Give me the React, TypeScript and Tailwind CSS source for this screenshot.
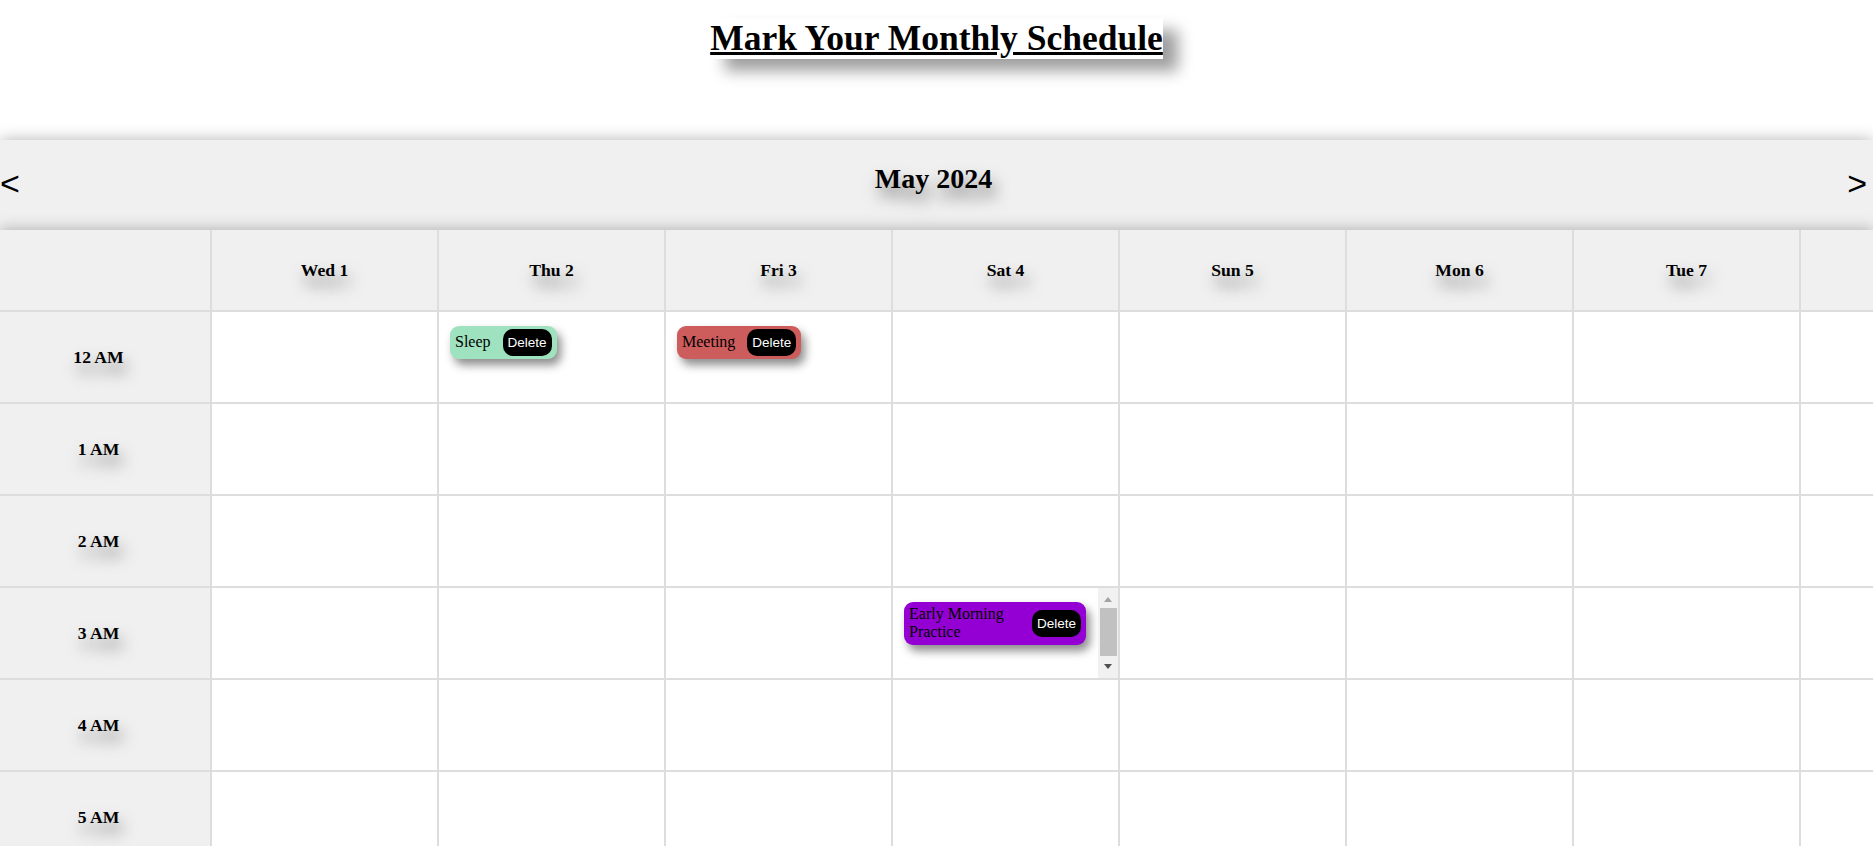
import React from "react";

type CalEvent = {
    day: number;
    hour: number;
    title: string;
    color: string;
};

const events: CalEvent[] = [
    { day: 2, hour: 0, title: "Sleep", color: "bg-[#9fe2bf]" },
    { day: 3, hour: 0, title: "Meeting", color: "bg-[#cd5c5c]" },
    { day: 4, hour: 3, title: "Early Morning Practice", color: "bg-[#9400d3]" },
];

const DAY_NAMES = ["Sun", "Mon", "Tue", "Wed", "Thu", "Fri", "Sat"];
const YEAR = 2024;
const MONTH = 4; // May

const hourLabel = (h: number): string => {
    const hh = h % 12 === 0 ? 12 : h % 12;
    return `${hh} ${h < 12 ? "AM" : "PM"}`;
};

function EventChip({ ev, fill }: { ev: CalEvent; fill?: boolean }) {
    return (
        <div
            className={`${fill ? "flex" : "inline-flex"} items-center gap-[12px] rounded-[9px] px-[5px] py-[3px] shadow-[4px_6px_10px_rgba(0,0,0,0.45)] ${ev.color}`}
        >
            <span className={`${fill ? "min-w-0 flex-1" : ""} text-[16px] leading-[18.4px] text-black`}>
                {ev.title}
            </span>
            <button className="shrink-0 rounded-[10px] bg-black px-[5px] py-[6px] font-['Liberation_Sans',Arial,sans-serif] text-[13.5px] leading-[15px] text-white">
                Delete
            </button>
        </div>
    );
}

// cell scrollbar drawn over the cell's right edge
function CellScrollbar() {
    return (
        <div className="absolute top-0 right-0 bottom-0 w-[20px] bg-[#f1f1f1]">
            <div className="absolute top-[9px] left-[6px] h-0 w-0 border-x-[4px] border-b-[5px] border-x-transparent border-b-[#a3a3a3]" />
            <div className="absolute top-[20px] left-[2px] h-[48px] w-[17px] bg-[#c1c1c1]" />
            <div className="absolute bottom-[9px] left-[6px] h-0 w-0 border-x-[4px] border-t-[5px] border-x-transparent border-t-[#505050]" />
        </div>
    );
}

const labelShadow = "[text-shadow:3px_10px_15px_rgba(0,0,0,0.5)]";

export default function App() {
    const daysInMonth = new Date(YEAR, MONTH + 1, 0).getDate();
    const days = Array.from({ length: daysInMonth }, (_, i) => i + 1);
    const hours = Array.from({ length: 24 }, (_, i) => i);

    const findEvent = (day: number, hour: number) =>
        events.find((e) => e.day === day && e.hour === hour);

    return (
        <div className="h-[846px] overflow-hidden bg-white font-['Liberation_Serif','Times_New_Roman',serif] text-black">
            {/* Title */}
            <div className="pt-[18px] pb-[81px] text-center">
                <h1 className="inline-block text-[35.5px] font-bold leading-[41px] underline shadow-[15px_12px_15px_rgba(0,0,0,0.38)]">
                    Mark Your Monthly Schedule
                </h1>
            </div>

            {/* Month bar */}
            <div className="flex h-[90px] items-center justify-between bg-[#f0f0f0] shadow-[0_0_15px_rgba(0,0,0,0.3)]">
                <button className="mb-[4px] font-['Liberation_Sans',Arial,sans-serif] text-[34px] leading-[40px]">&lt;</button>
                <h2 className={`mb-[12px] text-[28px] font-bold leading-[32px] ${labelShadow}`}>
                    May 2024
                </h2>
                <button className="mr-[6px] mb-[4px] font-['Liberation_Sans',Arial,sans-serif] text-[34px] leading-[40px]">&gt;</button>
            </div>

            {/* Calendar grid */}
            <div className="grid grid-cols-[212px_repeat(31,227px)] bg-white shadow-[0_0_15px_rgba(0,0,0,0.3)]">
                {/* Header row */}
                <div className="h-[82px] border-r-2 border-b-2 border-[#ddd] bg-[#f0f0f0]" />
                {days.map((d) => {
                    const dow = DAY_NAMES[new Date(YEAR, MONTH, d).getDay()];
                    return (
                        <div
                            key={`h-${d}`}
                            className="flex h-[82px] items-center justify-center border-r-2 border-b-2 border-[#ddd] bg-[#f0f0f0]"
                        >
                            <span className={`text-[17.6px] font-bold leading-[20px] ${labelShadow}`}>
                                {dow} {d}
                            </span>
                        </div>
                    );
                })}

                {/* Hour rows */}
                {hours.map((h) => (
                    <React.Fragment key={`r-${h}`}>
                        <div className="flex h-[92px] items-center justify-center border-r-2 border-b-2 border-[#ddd] bg-[#f0f0f0] pr-[13px]">
                            <span className={`text-[17.6px] font-bold leading-[20px] ${labelShadow}`}>
                                {hourLabel(h)}
                            </span>
                        </div>
                        {days.map((d) => {
                            const ev = findEvent(d, h);
                            if (ev && ev.title.length > 12) {
                                return (
                                    <div
                                        key={`c-${h}-${d}`}
                                        className="relative h-[92px] border-r-2 border-b-2 border-[#ddd] pt-[14px] pr-[32px] pl-[11px]"
                                    >
                                        <EventChip ev={ev} fill />
                                        <CellScrollbar />
                                    </div>
                                );
                            }
                            return (
                                <div
                                    key={`c-${h}-${d}`}
                                    className="h-[92px] border-r-2 border-b-2 border-[#ddd] pt-[14px] pl-[11px]"
                                >
                                    {ev && <EventChip ev={ev} />}
                                </div>
                            );
                        })}
                    </React.Fragment>
                ))}
            </div>
        </div>
    );
}
